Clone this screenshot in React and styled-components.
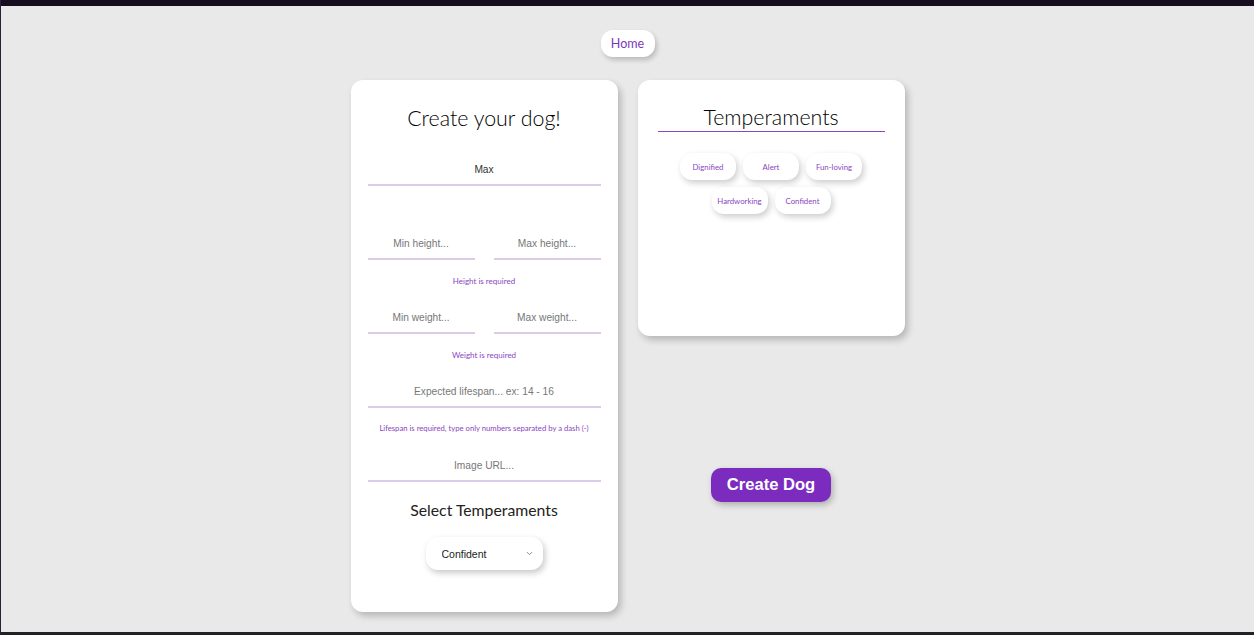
import styled, { createGlobalStyle } from "styled-components";
import { ChevronDown } from "lucide-react";

const GlobalStyle = createGlobalStyle`
  html, body {
    margin: 0;
    padding: 0;
    background: #e9e9e9;
    font-family: Lato, "Noto Sans", sans-serif;
  }
  * {
    box-sizing: border-box;
  }
`;

const temperaments = ["Dignified", "Alert", "Fun-loving", "Hardworking", "Confident"];

const App = () => {
  return (
    <Page>
      <GlobalStyle />
      <TopBar />
      <Content>
        <HomeButton>Home</HomeButton>
        <Columns>
          <Card $padding="24px 17px 42px">
            <Title>Create your dog!</Title>
            <Input $mt="22px" defaultValue="Max" />
            <Row $mt="42px">
              <Input placeholder="Min height..." />
              <Input placeholder="Max height..." />
            </Row>
            <Error>Height is required</Error>
            <Row $mt="15px">
              <Input placeholder="Min weight..." />
              <Input placeholder="Max weight..." />
            </Row>
            <Error>Weight is required</Error>
            <Input $mt="15px" placeholder="Expected lifespan... ex: 14 - 16" />
            <Error $mt="14px" $tight>
              Lifespan is required, type only numbers separated by a dash (-)
            </Error>
            <Input $mt="16px" placeholder="Image URL..." />
            <SubTitle>Select Temperaments</SubTitle>
            <SelectWrap>
              <Select defaultValue="Confident">
                {temperaments.map((t) => (
                  <option key={t}>{t}</option>
                ))}
              </Select>
              <Chevron>
                <ChevronDown size={9} strokeWidth={2} />
              </Chevron>
            </SelectWrap>
          </Card>

          <Side>
            <Card $padding="23px 20px 20px" $height="256px">
              <Title $underline>Temperaments</Title>
              <Pills>
                {temperaments.map((t) => (
                  <Pill key={t}>{t}</Pill>
                ))}
              </Pills>
            </Card>
            <CreateButton>Create Dog</CreateButton>
          </Side>
        </Columns>
      </Content>
      <BottomBar />
    </Page>
  );
};

const Page = styled.div`
  height: 635px;
  display: flex;
  flex-direction: column;
  border-left: 1px solid #2a2138;
  overflow: hidden;
`;

const TopBar = styled.div`
  height: 6px;
  flex: none;
  background: #160d20;
`;

const BottomBar = styled.div`
  height: 3px;
  flex: none;
  background: #222226;
  margin-top: auto;
`;

const Content = styled.main`
  display: flex;
  flex-direction: column;
  align-items: center;
  padding-top: 24px;
`;

const HomeButton = styled.button`
  width: 54px;
  height: 27px;
  border: none;
  border-radius: 12px;
  background: #fff;
  color: #7a38bd;
  font-family: Lato, sans-serif;
  font-weight: 400;
  font-size: 12.5px;
  box-shadow: 2px 3px 5px rgba(0, 0, 0, 0.2);
  padding: 0;
  cursor: pointer;
`;

const Columns = styled.div`
  display: flex;
  gap: 20px;
  margin-top: 23px;
  align-items: flex-start;
`;

const Side = styled.div`
  display: flex;
  flex-direction: column;
  align-items: center;
`;

const Card = styled.section`
  width: 267px;
  height: ${(p) => p.$height || "auto"};
  background: #fff;
  border-radius: 12px;
  padding: ${(p) => p.$padding};
  box-shadow: 3px 4px 7px rgba(0, 0, 0, 0.22);
  display: flex;
  flex-direction: column;
  align-items: center;
`;

const Title = styled.h1`
  margin: 0;
  width: 100%;
  text-align: center;
  font-family: Lato, sans-serif;
  font-weight: 300;
  font-size: 21.4px;
  line-height: 28px;
  color: #000;
  border-bottom: ${(p) => (p.$underline ? "1px solid #8847c0" : "none")};
`;

const SubTitle = styled.h2`
  margin: 17px 0 0;
  font-family: Lato, sans-serif;
  font-weight: 400;
  font-size: 15.8px;
  line-height: 22px;
  color: #222;
`;

const Row = styled.div`
  display: flex;
  justify-content: space-between;
  width: 100%;
  margin-top: ${(p) => p.$mt || "0"};
  input {
    width: 107px;
    margin-top: 0;
  }
`;

const Input = styled.input`
  display: block;
  width: 100%;
  height: 32px;
  margin-top: ${(p) => p.$mt || "0"};
  padding: 1px 0 0;
  border: none;
  border-bottom: 2px solid #dccbe8;
  outline: none;
  text-align: center;
  font-family: "Liberation Sans", Arial, sans-serif;
  font-size: 10.2px;
  color: #333;
  background: transparent;
  &::placeholder {
    color: #777;
  }
`;

const Error = styled.p`
  margin: ${(p) => p.$mt || "15px"} 0 0;
  font-family: Lato, sans-serif;
  font-size: ${(p) => (p.$tight ? "7.7px" : "8px")};
  line-height: 12px;
  color: #8a45c2;
  text-align: center;
  white-space: nowrap;
`;

const SelectWrap = styled.div`
  position: relative;
  width: 117px;
  height: 33px;
  margin-top: 16px;
  border-radius: 12px;
  background: #fff;
  box-shadow: 2px 3px 6px rgba(0, 0, 0, 0.22);
`;

const Select = styled.select`
  appearance: none;
  width: 100%;
  height: 100%;
  border: none;
  outline: none;
  background: transparent;
  padding: 0 0 0 16px;
  font-family: "Liberation Sans", Arial, sans-serif;
  font-size: 10.5px;
  color: #222;
`;

const Chevron = styled.span`
  position: absolute;
  right: 9px;
  top: 12px;
  color: #666;
  pointer-events: none;
  display: flex;
`;

const Pills = styled.div`
  display: flex;
  flex-wrap: wrap;
  justify-content: center;
  gap: 7px;
  margin-top: 21px;
  width: 100%;
`;

const Pill = styled.span`
  width: 56px;
  height: 27px;
  display: flex;
  align-items: center;
  justify-content: center;
  border-radius: 12px;
  background: #fff;
  box-shadow: 2px 3px 6px rgba(0, 0, 0, 0.2);
  font-family: Lato, sans-serif;
  font-size: 7.8px;
  color: #8a45c2;
`;

const CreateButton = styled.button`
  margin-top: 132px;
  width: 120px;
  height: 34px;
  border: none;
  border-radius: 10px;
  background: #7b2cbf;
  color: #fff;
  font-family: "Liberation Sans", Arial, sans-serif;
  font-weight: 700;
  font-size: 16.6px;
  box-shadow: 2px 3px 6px rgba(0, 0, 0, 0.25);
  cursor: pointer;
  padding: 0;
`;

export default App;
